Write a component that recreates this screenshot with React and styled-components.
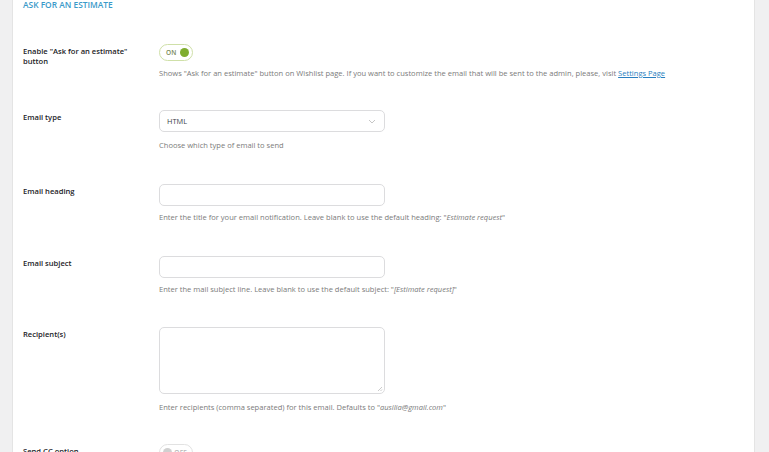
import React from "react";
import styled, { createGlobalStyle } from "styled-components";

const Global = createGlobalStyle`
  html, body { margin: 0; padding: 0; background: #f0f0f1; }
  body { font-family: "Open Sans", "Noto Sans", sans-serif; color: #3c434a; }
`;

const Page = styled.div`
  height: 452px;
  overflow: hidden;
  display: flex;
`;

const Panel = styled.div`
  margin-left: 12px;
  width: 743px;
  background: #fff;
  border-left: 1px solid #e4e4e4;
  border-right: 1px solid #e4e4e4;
  box-sizing: border-box;
  padding: 0 0 0 10px;
`;

const Title = styled.h2`
  margin: 0;
  font-size: 8.4px;
  line-height: 12px;
  font-weight: 600;
  color: #3a9ac9;
  text-transform: uppercase;
  margin-top: -1px;
`;

const Form = styled.div`
  display: flex;
  flex-direction: column;
  padding-top: 33px;
`;

const Row = styled.div`
  display: grid;
  grid-template-columns: 136px 1fr;
  margin-bottom: ${(p) => p.gap ?? 32}px;
`;

const Label = styled.div`
  font-size: 7.6px;
  line-height: 10px;
  font-weight: 600;
  color: #1d2327;
  padding-top: 2px;
  padding-right: 14px;
`;

const Field = styled.div`
  display: flex;
  flex-direction: column;
  align-items: flex-start;
`;

const Help = styled.p`
  margin: ${(p) => p.mt ?? 8}px 0 0;
  font-size: 7.55px;
  line-height: 10px;
  color: #7b7b7b;
  white-space: nowrap;
  em { font-style: italic; }
  a { color: #2a7fc0; text-decoration: underline; }
`;

const Toggle = styled.div`
  width: 34px;
  height: 17px;
  box-sizing: border-box;
  border: 1px solid ${(p) => (p.on ? "#cfe0a8" : "#e2e2e2")};
  border-radius: 9px;
  display: flex;
  align-items: center;
  flex-direction: ${(p) => (p.on ? "row" : "row-reverse")};
  justify-content: space-between;
  padding: ${(p) => (p.on ? "0 3px 0 6px" : "0 5px 0 3px")};
  font-size: 6.5px;
  font-weight: 600;
  color: ${(p) => (p.on ? "#7a8a5a" : "#b8b8b8")};
  letter-spacing: 0.2px;
`;

const Knob = styled.span`
  width: 9px;
  height: 9px;
  border-radius: 50%;
  background: ${(p) => (p.on ? "#7fad2f" : "#d0d0d0")};
`;

const Select = styled.div`
  width: 226px;
  height: 22px;
  box-sizing: border-box;
  border: 1px solid #dcdcde;
  border-radius: 5px;
  display: flex;
  align-items: center;
  justify-content: space-between;
  padding: 0 8px 0 7px;
  font-size: 7.4px;
  color: #3c434a;
`;

const Input = styled.div`
  width: 226px;
  height: ${(p) => p.h ?? 22}px;
  box-sizing: border-box;
  border: 1px solid #dcdcde;
  border-radius: 5px;
  position: relative;
`;

const Grip = styled.svg`
  position: absolute;
  right: 1px;
  bottom: 1px;
`;

export default function App() {
  return (
    <>
      <Global />
      <Page>
        <Panel>
          <Title>Ask for an estimate</Title>
          <Form>
            <Row gap={32}>
              <Label>Enable "Ask for an estimate" button</Label>
              <Field>
                <Toggle on>
                  <span>ON</span>
                  <Knob on />
                </Toggle>
                <Help mt={7}>
                  Shows "Ask for an estimate" button on Wishlist page. If you want to customize the email that will be sent to the admin, please, visit{" "}
                  <a href="#">Settings Page</a>
                </Help>
              </Field>
            </Row>
            <Row gap={34}>
              <Label>Email type</Label>
              <Field>
                <Select>
                  <span>HTML</span>
                  <svg width="8" height="5" viewBox="0 0 8 5">
                    <path d="M1 1l3 3 3-3" fill="none" stroke="#c6c6c6" strokeWidth="1" />
                  </svg>
                </Select>
                <Help>Choose which type of email to send</Help>
              </Field>
            </Row>
            <Row gap={34}>
              <Label>Email heading</Label>
              <Field>
                <Input />
                <Help mt={6}>
                  Enter the title for your email notification. Leave blank to use the default heading: "<em>Estimate request</em>"
                </Help>
              </Field>
            </Row>
            <Row gap={33}>
              <Label>Email subject</Label>
              <Field>
                <Input />
                <Help mt={6}>
                  Enter the mail subject line. Leave blank to use the default subject: "<em>[Estimate request]</em>"
                </Help>
              </Field>
            </Row>
            <Row gap={32}>
              <Label>Recipient(s)</Label>
              <Field>
                <Input h={67}>
                  <Grip width="6" height="6" viewBox="0 0 6 6">
                    <path d="M5 1L1 5M5 3.5L3.5 5" stroke="#b5b5b5" strokeWidth="0.7" />
                  </Grip>
                </Input>
                <Help>
                  Enter recipients (comma separated) for this email. Defaults to "<em>ausilia@gmail.com</em>"
                </Help>
              </Field>
            </Row>
            <Row>
              <Label>Send CC option</Label>
              <Field>
                <Toggle>
                  <span>OFF</span>
                  <Knob />
                </Toggle>
              </Field>
            </Row>
          </Form>
        </Panel>
      </Page>
    </>
  );
}
